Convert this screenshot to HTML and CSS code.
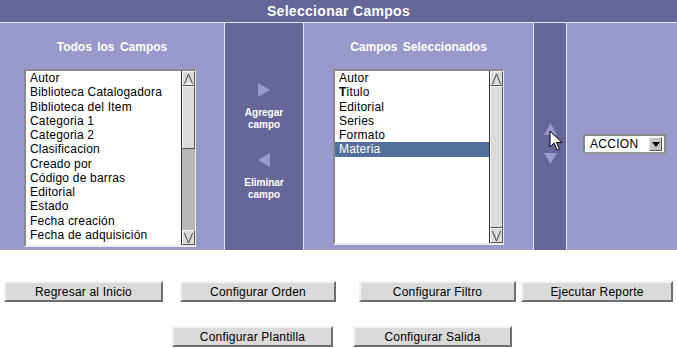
FILE: index.html
```html
<!DOCTYPE html>
<html>
<head>
<meta charset="utf-8">
<link rel="stylesheet" href="styles.css">
</head>
<body>
<div class="header">Seleccionar Campos</div>
<div class="panel">
  <div class="col col-all">
    <div class="col-title">Todos los Campos</div>
    <div class="listbox lb-all">
      <div class="items">
        <div class="item">Autor</div>
        <div class="item">Biblioteca Catalogadora</div>
        <div class="item">Biblioteca del Item</div>
        <div class="item">Categoria 1</div>
        <div class="item">Categoria 2</div>
        <div class="item">Clasificacion</div>
        <div class="item">Creado por</div>
        <div class="item">Código de barras</div>
        <div class="item">Editorial</div>
        <div class="item">Estado</div>
        <div class="item">Fecha creación</div>
        <div class="item">Fecha de adquisición</div>
      </div>
      <div class="scrollbar">
        <div class="sb-btn"><svg width="12" height="14" viewBox="0 0 12 14"><path d="M1.5 12.5 L6 1.5 L10.5 12.5" fill="none" stroke="#333" stroke-width="1"/><path d="M1.5 12.5 H10.5" stroke="#fff" stroke-width="1"/></svg></div>
        <div class="sb-thumb short"></div>
        <div class="sb-track"></div>
        <div class="sb-btn"><svg width="12" height="14" viewBox="0 0 12 14"><path d="M1.5 1.5 L6 12.5 L10.5 1.5" fill="none" stroke="#333" stroke-width="1"/></svg></div>
      </div>
    </div>
  </div>
  <div class="col col-mid">
    <svg class="tri tri-add" width="12" height="14" viewBox="0 0 12 14"><path d="M0 0 L12 7 L0 14 Z" fill="#9999cc"/></svg>
    <div class="mid-label">Agregar<br>campo</div>
    <svg class="tri tri-del" width="12" height="14" viewBox="0 0 12 14"><path d="M12 0 L0 7 L12 14 Z" fill="#9999cc"/></svg>
    <div class="mid-label">Eliminar<br>campo</div>
  </div>
  <div class="col col-sel">
    <div class="col-title">Campos Seleccionados</div>
    <div class="listbox lb-sel">
      <div class="items">
        <div class="item">Autor</div>
        <div class="item"><b>T</b>itulo</div>
        <div class="item">Editorial</div>
        <div class="item">Series</div>
        <div class="item">Formato</div>
        <div class="item selected">Materia</div>
      </div>
      <div class="scrollbar">
        <div class="sb-btn"><svg width="12" height="14" viewBox="0 0 12 14"><path d="M1.5 12.5 L6 1.5 L10.5 12.5" fill="none" stroke="#333" stroke-width="1"/></svg></div>
        <div class="sb-thumb full"></div>
        <div class="sb-btn"><svg width="12" height="14" viewBox="0 0 12 14"><path d="M1.5 1.5 L6 12.5 L10.5 1.5" fill="none" stroke="#333" stroke-width="1"/></svg></div>
      </div>
    </div>
  </div>
  <div class="col col-order">
    <svg class="tri tri-up" width="13" height="12" viewBox="0 0 13 12"><path d="M6.5 0 L13 12 L0 12 Z" fill="#9999cc"/></svg>
    <svg class="tri tri-down" width="13" height="11" viewBox="0 0 13 11"><path d="M0 0 L13 0 L6.5 11 Z" fill="#9999cc"/></svg>
    <svg class="cursor" width="14" height="22" viewBox="0 0 14 22"><path d="M1 1 L1 17 L5 13 L8 20 L10.5 19 L7.5 12.5 L13 12.5 Z" fill="#fff" stroke="#000" stroke-width="1" stroke-linejoin="miter"/></svg>
  </div>
  <div class="col col-action">
    <div class="select">
      <span class="select-text">ACCION</span>
      <span class="select-btn"><svg width="8" height="5" viewBox="0 0 8 5"><path d="M0 0 H8 L4 5 Z" fill="#000"/></svg></span>
    </div>
  </div>
</div>
<div class="btn-row row1">
  <button class="btn b-inicio">Regresar al Inicio</button>
  <button class="btn b-orden">Configurar Orden</button>
  <button class="btn b-filtro">Configurar Filtro</button>
  <button class="btn b-ejecutar">Ejecutar Reporte</button>
</div>
<div class="btn-row row2">
  <button class="btn b-plantilla">Configurar Plantilla</button>
  <button class="btn b-salida">Configurar Salida</button>
</div>
</body>
</html>
```
FILE: styles.css
```css
html, body {
  margin: 0;
  padding: 0;
  background: #fff;
  font-family: "Liberation Sans", Arial, sans-serif;
}
.header {
  height: 22px;
  line-height: 22px;
  background: #666699;
  color: #fff;
  font-weight: bold;
  font-size: 14px;
  text-align: center;
  border-bottom: 1px solid #e4e4f0;
  letter-spacing: 0.3px;
}
.panel {
  display: flex;
  height: 227px;
}
.col {
  position: relative;
  box-sizing: border-box;
  display: flex;
  flex-direction: column;
}
.col-all {
  background: #9999cc;
  border-right: 1px solid #e4e4f0;
  width: 225px;
}
.col-mid {
  width: 79px;
  background: #666699;
  border-right: 1px solid #e4e4f0;
  align-items: center;
}
.col-sel {
  width: 230px;
  background: #9999cc;
  border-right: 1px solid #e4e4f0;
}
.col-order {
  width: 33px;
  background: #666699;
  border-right: 1px solid #e4e4f0;
  align-items: center;
}
.col-action {
  flex: 1;
  background: #9999cc;
}
.col-title {
  margin-top: 17px;
  line-height: 14px;
  height: 14px;
  text-align: center;
  color: #fff;
  font-weight: bold;
  font-size: 12px;
  word-spacing: 2px;
}
.listbox {
  display: flex;
  box-sizing: border-box;
  background: #fff;
  border-top: 2px solid #8a8a8a;
  border-left: 2px solid #8a8a8a;
  border-right: 1px solid #eeeeee;
  border-bottom: 2px solid #eeeeee;
  margin-top: 15px;
}
.lb-all {
  margin-left: 24px;
  width: 172px;
  height: 178px;
}
.lb-sel {
  margin-left: 29px;
  width: 171px;
  height: 176px;
}
.items {
  flex: 1;
  overflow: hidden;
}
.item {
  height: 14.27px;
  line-height: 14.27px;
  font-size: 12px;
  padding-left: 4px;
  color: #000;
  white-space: nowrap;
  letter-spacing: 0.2px;
}
.item.selected {
  background: #52709a;
  color: #fff;
}
.scrollbar {
  width: 14px;
  background: #b8b8b8;
  border-left: 1px solid #333;
  display: flex;
  flex-direction: column;
  box-sizing: border-box;
}
.sb-btn {
  height: 15px;
  background: #dcdcdc;
  border-top: 1px solid #f4f4f4;
  border-left: 1px solid #f4f4f4;
  border-bottom: 1px solid #555;
  border-right: 1px solid #555;
  box-sizing: border-box;
  display: flex;
  align-items: center;
  justify-content: center;
  overflow: hidden;
}
.sb-btn svg {
  display: block;
}
.sb-thumb {
  background: #dcdcdc;
  border-top: 1px solid #f4f4f4;
  border-left: 1px solid #f4f4f4;
  border-bottom: 1px solid #555;
  border-right: 1px solid #555;
  box-sizing: border-box;
}
.sb-thumb.short {
  height: 63px;
}
.sb-thumb.full {
  flex: 1;
}
.sb-track {
  flex: 1;
}
.tri {
  display: block;
}
.tri-add {
  margin-top: 60px;
}
.tri-del {
  margin-top: 22px;
}
.mid-label {
  margin-top: 10px;
  color: #fff;
  font-weight: bold;
  font-size: 10px;
  line-height: 12px;
  text-align: center;
}
.tri-up {
  margin-top: 100px;
}
.tri-down {
  margin-top: 18px;
}
.cursor {
  position: absolute;
  left: 15px;
  top: 107px;
}
.select {
  margin-top: 111px;
  margin-left: 16px;
  width: 83px;
  height: 20px;
  box-sizing: border-box;
  background: #fff;
  border: 2px solid #8a8a8a;
  border-bottom-color: #9a9a9a;
  display: flex;
  align-items: center;
  justify-content: space-between;
}
.select-text {
  font-size: 12px;
  padding-left: 5px;
  letter-spacing: 0.3px;
}
.select-btn {
  width: 13px;
  height: 14px;
  margin-right: 2px;
  background: #c4c4c4;
  box-sizing: border-box;
  border-top: 1px solid #f0f0f0;
  border-left: 1px solid #f0f0f0;
  border-right: 1px solid #555;
  border-bottom: 1px solid #555;
  display: flex;
  align-items: center;
  justify-content: center;
}
.select-btn svg {
  display: block;
}
.btn-row {
  display: flex;
}
.row1 {
  margin-top: 31px;
}
.row2 {
  margin-top: 24px;
}
.btn {
  box-sizing: border-box;
  height: 21px;
  margin: 0;
  padding: 0;
  background: #dadada;
  border-top: 2px solid #f2f2f2;
  border-left: 2px solid #f2f2f2;
  border-right: 2px solid #6e6e6e;
  border-bottom: 2px solid #6e6e6e;
  font-family: "Liberation Sans", Arial, sans-serif;
  font-size: 12px;
  color: #000;
  text-align: center;
  letter-spacing: 0.2px;
}
.b-inicio { margin-left: 4px; width: 159px; }
.b-orden { margin-left: 17px; width: 156px; }
.b-filtro { margin-left: 23px; width: 157px; }
.b-ejecutar { margin-left: 5px; width: 152px; }
.b-plantilla { margin-left: 172px; width: 161px; }
.b-salida { margin-left: 20px; width: 159px; }
```
